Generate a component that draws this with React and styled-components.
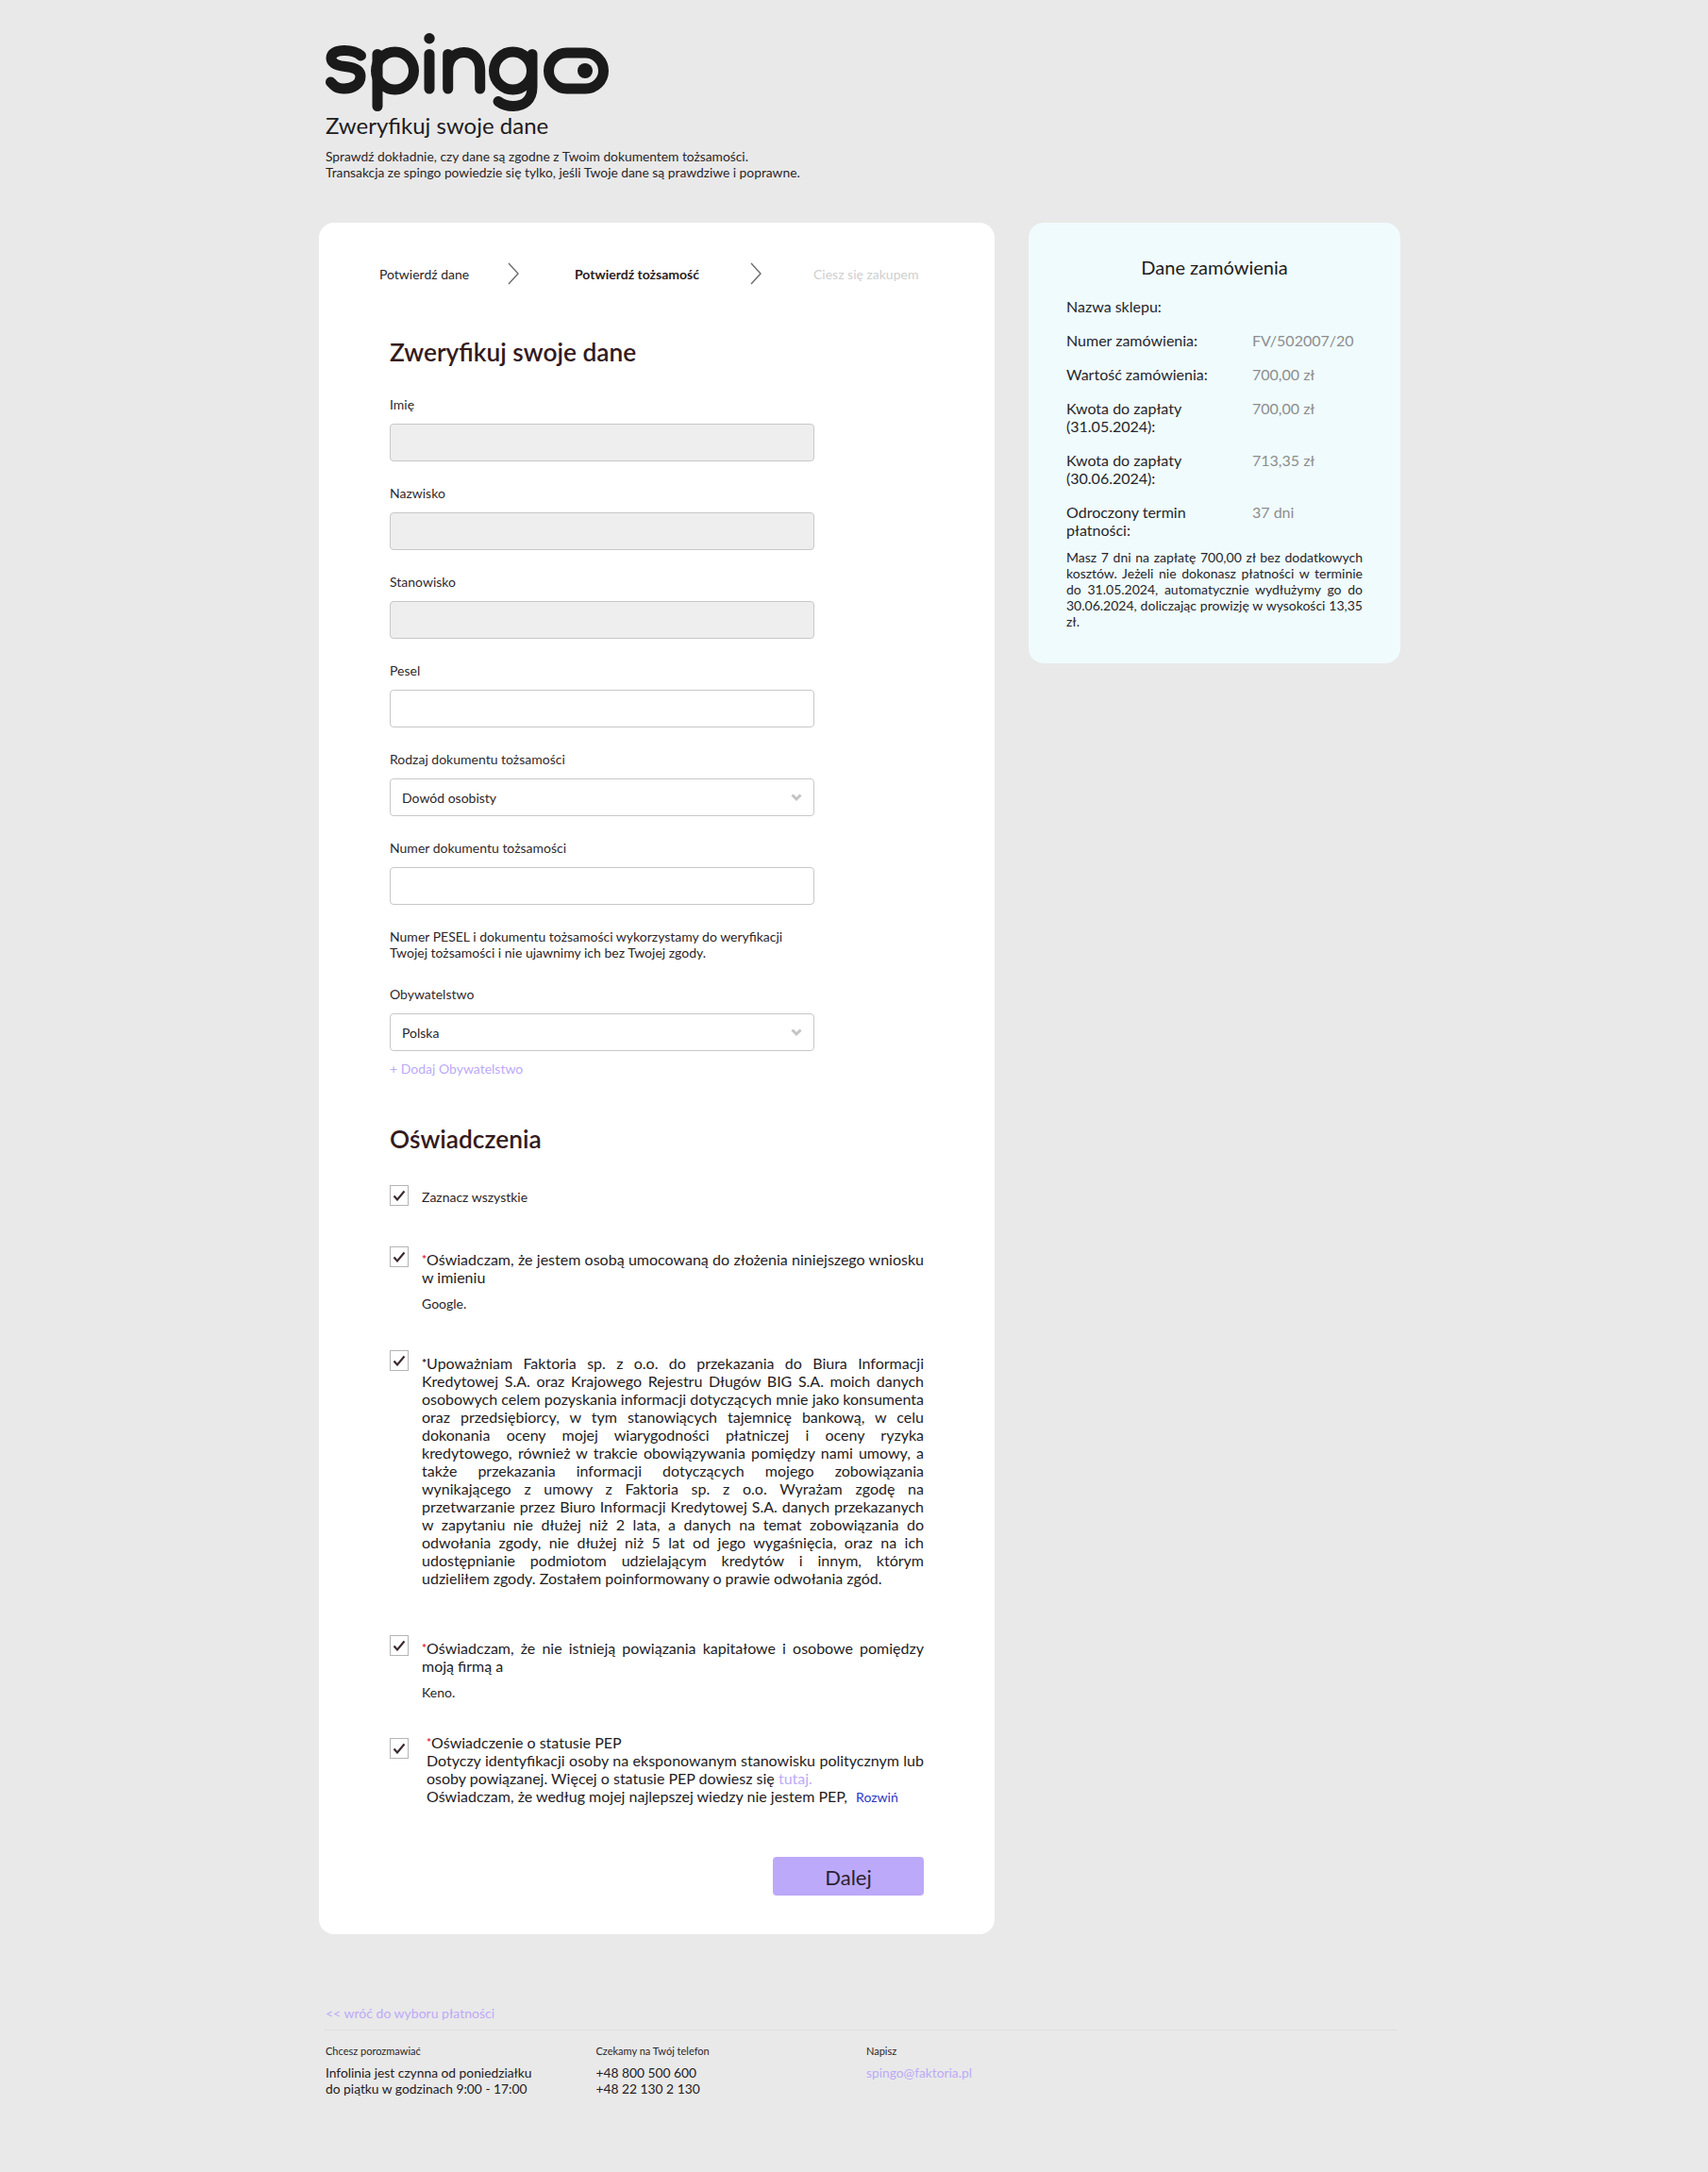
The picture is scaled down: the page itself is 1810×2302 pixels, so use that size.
import React from 'react';
import styled, { createGlobalStyle } from 'styled-components';

const Global = createGlobalStyle`
  html, body { margin: 0; padding: 0; background: #e9e9e9; }
  body { font-family: Lato, "Noto Sans", sans-serif; color: #1f1a1c; }
  * { box-sizing: border-box; }
`;

const Page = styled.div`
  width: 1810px;
  min-height: 2302px;
  background: #e9e9e9;
  padding: 30px 0 0 338px;
`;
const Header = styled.header`
  padding-left: 7px;
  width: 800px;
`;
const LogoBox = styled.div`
  height: 89px;
  margin-left: -5px;
`;
const PageTitle = styled.h1`
  margin: 0;
  font-size: 24px;
  line-height: 28px;
  font-weight: 400;
  color: #201c20;
`;
const Lead = styled.p`
  margin: 10px 0 0;
  font-size: 13.8px;
  line-height: 17px;
  color: #2b2628;
`;
const Columns = styled.div`
  display: flex;
  align-items: flex-start;
  gap: 36px;
  margin-top: 45px;
`;
const MainCard = styled.main`
  width: 716px;
  height: 1814px;
  background: #fff;
  border-radius: 16px;
  padding: 39px 75px 0 75px;
`;
const Steps = styled.nav`
  display: flex;
  align-items: center;
  margin-left: -11px;
  height: 30px;
  font-size: 14px;
`;
const Step = styled.span`
  width: ${p => p.$w}px;
  flex: none;
  font-weight: ${p => (p.$active ? 700 : 400)};
  color: ${p => (p.$muted ? '#cfcfcf' : p.$active ? '#2b1d20' : '#2b2628')};
`;
const StepArrow = styled.svg`
  width: 14px;
  height: 26px;
  flex: none;
  margin-right: ${p => p.$mr}px;
  fill: none;
  stroke: #6f6a6b;
  stroke-width: 1.4;
`;
const SectionTitle = styled.h2`
  margin: ${p => p.$mt}px 0 0;
  font-size: 26.3px;
  line-height: 32px;
  font-weight: 600;
  color: #341a1c;
`;
const Field = styled.div`
  margin-top: ${p => p.$mt ?? 25}px;
  width: 450px;
`;
const Label = styled.label`
  display: block;
  font-size: 14px;
  line-height: 18px;
  color: #2f2a2c;
  margin-bottom: 11px;
`;
const InputBox = styled.div`
  height: 40px;
  border: 1px solid #c8c8c8;
  border-radius: 4px;
  background: ${p => (p.$disabled ? '#eeeeee' : '#fff')};
  display: flex;
  align-items: center;
  justify-content: space-between;
  padding: 1px 11px 0 12px;
  font-size: 14px;
  color: #2b2628;
`;
const Chevron = styled.svg`
  width: 14px;
  height: 10px;
  margin-top: -1px;
  fill: none;
  stroke: #c4c4c4;
  stroke-width: 3;
`;
const Hint = styled.p`
  margin: 25px 0 0;
  font-size: 14px;
  line-height: 17px;
  color: #2b2628;
  width: 450px;
`;
const AddLink = styled.a`
  display: block;
  margin-top: 10px;
  font-size: 14px;
  line-height: 18px;
  color: #bcaaf8;
`;
const Consents = styled.div`
  margin-top: 33px;
  width: 566px;
`;
const Consent = styled.div`
  display: flex;
  align-items: flex-start;
  gap: ${p => (p.$wide ? 19 : 14)}px;
  margin-top: ${p => p.$mt}px;
`;
const Box = styled.span`
  flex: none;
  width: 20px;
  height: 22px;
  border: 1px solid #b5b5b5;
  background: #fff;
  display: flex;
  align-items: center;
  justify-content: center;
  margin-top: ${p => p.$mt ?? 0}px;
`;
const Check = styled.svg`
  width: 14px;
  height: 12px;
  fill: none;
  stroke: #3a2a2c;
  stroke-width: 2.1;
`;
const ConsentBody = styled.div`
  flex: 1;
  min-width: 0;
  padding-top: ${p => p.$pt ?? 0}px;
`;
const ConsentText = styled.p`
  margin: 0;
  font-size: 16px;
  line-height: 19px;
  color: #241c1e;
  text-align: justify;
`;
const SmallText = styled.p`
  margin: ${p => p.$mt ?? 0}px 0 0;
  font-size: 14px;
  line-height: 18px;
  color: #2b2628;
`;
const Req = styled.span`
  color: ${p => (p.$dark ? '#241c1e' : '#e8233f')};
  font-size: 12px;
  font-weight: 700;
  vertical-align: 2px;
  line-height: 0;
`;
const SoftLink = styled.a`
  color: #bcaaf8;
`;
const Expand = styled.a`
  color: #2a35c8;
  font-size: 14px;
  margin-left: 5px;
`;
const ActionRow = styled.div`
  display: flex;
  justify-content: flex-end;
  margin-top: 54px;
  width: 566px;
`;
const NextButton = styled.button`
  width: 160px;
  height: 41px;
  border: 0;
  border-radius: 4px;
  background: #bca9f9;
  font-family: inherit;
  font-size: 22px;
  padding: 2px 0 0;
  color: #2a2230;
`;
const Side = styled.aside`
  width: 394px;
  height: 467px;
  background: #f0fbfd;
  border-radius: 16px;
  padding: 35px 40px 0;
`;
const SideTitle = styled.h3`
  margin: 0 0 20px;
  text-align: center;
  font-size: 20px;
  line-height: 24px;
  font-weight: 400;
  color: #1f1c20;
`;
const Row = styled.div`
  display: grid;
  grid-template-columns: 197px 1fr;
  font-size: 16px;
  line-height: 19px;
  margin-bottom: 17px;
  color: #26262a;
`;
const RowLabel = styled.span`
  max-width: 160px;
  white-space: ${p => (p.$nowrap ? 'nowrap' : 'normal')};
`;
const RowValue = styled.span`
  color: #8d8d8f;
`;
const SideNote = styled.p`
  margin: -6px 0 0;
  font-size: 14px;
  line-height: 17px;
  text-align: justify;
  color: #26262a;
`;
const Footer = styled.footer`
  margin: 75px 0 0 6px;
  width: 1136px;
`;
const Back = styled.a`
  display: block;
  font-size: 14px;
  line-height: 18px;
  color: #bcaaf8;
  padding: 0 0 8px 1px;
  border-bottom: 1px solid #dedede;
`;
const FootGrid = styled.div`
  display: grid;
  grid-template-columns: 286.5px 286.5px 1fr;
  padding: 15px 0 0 1px;
`;
const FootLabel = styled.div`
  font-size: 11px;
  line-height: 14px;
  color: #2b2628;
  margin-bottom: 7px;
`;
const FootText = styled.div`
  font-size: 13.8px;
  line-height: 17px;
  color: ${p => (p.$soft ? '#bcaaf8' : '#242022')};
`;

const Logo = () => (
  <svg width="310" height="89" viewBox="0 0 310 89" fill="none" stroke="#1a1a1a" strokeWidth="11" strokeLinecap="round" strokeLinejoin="round">
    <path d="M42.500 29c-4-3.500-10-5.500-17.500-5.500-8.500 0-14 3-14 8 0 6 6 8 15 9 10 1 16 4 16 10.500 0 8-8 13-17.500 13-8 0-10.500-3-14-7" />
    <path d="M60 27.500v55" />
    <circle cx="78.500" cy="45" r="20" />
    <path d="M115 27.500v36.500" />
    <circle cx="115" cy="10.700" r="5.700" fill="#1a1a1a" stroke="none" />
    <path d="M134.700 64V27.500M134.700 44c0-11 7-18.500 17-18.500s17 7.500 17 18.500v20" />
    <circle cx="203.500" cy="45" r="20" />
    <path d="M224 27.500V62c0 14-9 20.500-20 20.500-7 0-12-2-16-5" />
    <rect x="241.500" y="26" width="58" height="38" rx="19" />
    <circle cx="280" cy="45" r="8" fill="#1a1a1a" stroke="none" />
  </svg>
);

const Arrow = ({ mr }) => (
  <StepArrow $mr={mr} viewBox="0 0 14 26"><path d="M2 2l10 11L2 24" /></StepArrow>
);
const Drop = () => (
  <Chevron viewBox="0 0 14 10"><path d="M2.500 2.500l4.500 4.500 4.500-4.500" /></Chevron>
);
const Tick = ({ mt }) => (
  <Box $mt={mt}><Check viewBox="0 0 14 12"><path d="M1.500 6.500l3.500 4L12.500 1.500" /></Check></Box>
);

const order = [
  ['Nazwa sklepu:', '', true],
  ['Numer zamówienia:', 'FV/502007/20', true],
  ['Wartość zamówienia:', '700,00 zł', true],
  ['Kwota do zapłaty (31.05.2024):', '700,00 zł'],
  ['Kwota do zapłaty (30.06.2024):', '713,35 zł'],
  ['Odroczony termin płatności:', '37 dni'],
];

export default function App() {
  return (
    <Page>
      <Global />
      <Header>
        <LogoBox><Logo /></LogoBox>
        <PageTitle>Zweryfikuj swoje dane</PageTitle>
        <Lead>
          Sprawdź dokładnie, czy dane są zgodne z Twoim dokumentem tożsamości.<br />
          Transakcja ze spingo powiedzie się tylko, jeśli Twoje dane są prawdziwe i poprawne.
        </Lead>
      </Header>
      <Columns>
        <MainCard>
          <Steps>
            <Step $w={135}>Potwierdź dane</Step>
            <Arrow mr={58} />
            <Step $w={185} $active>Potwierdź tożsamość</Step>
            <Arrow mr={54} />
            <Step $w={120} $muted>Ciesz się zakupem</Step>
          </Steps>
          <SectionTitle $mt={52}>Zweryfikuj swoje dane</SectionTitle>
          <Field $mt={31}><Label>Imię</Label><InputBox $disabled /></Field>
          <Field><Label>Nazwisko</Label><InputBox $disabled /></Field>
          <Field><Label>Stanowisko</Label><InputBox $disabled /></Field>
          <Field><Label>Pesel</Label><InputBox /></Field>
          <Field><Label>Rodzaj dokumentu tożsamości</Label><InputBox>Dowód osobisty<Drop /></InputBox></Field>
          <Field><Label>Numer dokumentu tożsamości</Label><InputBox /></Field>
          <Hint>
            Numer PESEL i dokumentu tożsamości wykorzystamy do weryfikacji<br />
            Twojej tożsamości i nie ujawnimy ich bez Twojej zgody.
          </Hint>
          <Field $mt={27}><Label>Obywatelstwo</Label><InputBox>Polska<Drop /></InputBox></Field>
          <AddLink>+ Dodaj Obywatelstwo</AddLink>
          <SectionTitle $mt={49}>Oświadczenia</SectionTitle>
          <Consents>
            <Consent $mt={0}>
              <Tick />
              <ConsentBody $pt={4}><SmallText>Zaznacz wszystkie</SmallText></ConsentBody>
            </Consent>
            <Consent $mt={43}>
              <Tick />
              <ConsentBody $pt={4}>
                <ConsentText><Req>*</Req>Oświadczam, że jestem osobą umocowaną do złożenia niniejszego wniosku w imieniu</ConsentText>
                <SmallText $mt={10}>Google.</SmallText>
              </ConsentBody>
            </Consent>
            <Consent $mt={40}>
              <Tick />
              <ConsentBody $pt={4}>
                <ConsentText><Req $dark>*</Req>Upoważniam Faktoria sp. z o.o. do przekazania do Biura Informacji Kredytowej S.A. oraz Krajowego Rejestru Długów BIG S.A. moich danych osobowych celem pozyskania informacji dotyczących mnie jako konsumenta oraz przedsiębiorcy, w tym stanowiących tajemnicę bankową, w celu dokonania oceny mojej wiarygodności płatniczej i oceny ryzyka kredytowego, również w trakcie obowiązywania pomiędzy nami umowy, a także przekazania informacji dotyczących mojego zobowiązania wynikającego z umowy z Faktoria sp. z o.o. Wyrażam zgodę na przetwarzanie przez Biuro Informacji Kredytowej S.A. danych przekazanych w zapytaniu nie dłużej niż 2 lata, a danych na temat zobowiązania do odwołania zgody, nie dłużej niż 5 lat od jego wygaśnięcia, oraz na ich udostępnianie podmiotom udzielającym kredytów i innym, którym udzieliłem zgody. Zostałem poinformowany o prawie odwołania zgód.</ConsentText>
              </ConsentBody>
            </Consent>
            <Consent $mt={51}>
              <Tick />
              <ConsentBody $pt={4}>
                <ConsentText><Req>*</Req>Oświadczam, że nie istnieją powiązania kapitałowe i osobowe pomiędzy moją firmą a</ConsentText>
                <SmallText $mt={10}>Keno.</SmallText>
              </ConsentBody>
            </Consent>
            <Consent $mt={34} $wide>
              <Tick mt={5} />
              <ConsentBody>
                <ConsentText><Req>*</Req>Oświadczenie o statusie PEP<br />
                  Dotyczy identyfikacji osoby na eksponowanym stanowisku politycznym lub osoby powiązanej. Więcej o statusie PEP dowiesz się <SoftLink>tutaj.</SoftLink><br />
                  Oświadczam, że według mojej najlepszej wiedzy nie jestem PEP, <Expand>Rozwiń</Expand>
                </ConsentText>
              </ConsentBody>
            </Consent>
          </Consents>
          <ActionRow><NextButton>Dalej</NextButton></ActionRow>
        </MainCard>
        <Side>
          <SideTitle>Dane zamówienia</SideTitle>
          {order.map(([k, v, nowrap]) => (
            <Row key={k}><RowLabel $nowrap={nowrap}>{k}</RowLabel><RowValue>{v}</RowValue></Row>
          ))}
          <SideNote>Masz 7 dni na zapłatę 700,00 zł bez dodatkowych kosztów. Jeżeli nie dokonasz płatności w terminie do 31.05.2024, automatycznie wydłużymy go do 30.06.2024, doliczając prowizję w wysokości 13,35 zł.</SideNote>
        </Side>
      </Columns>
      <Footer>
        <Back>&lt;&lt; wróć do wyboru płatności</Back>
        <FootGrid>
          <div>
            <FootLabel>Chcesz porozmawiać</FootLabel>
            <FootText>Infolinia jest czynna od poniedziałku<br />do piątku w godzinach 9:00 - 17:00</FootText>
          </div>
          <div>
            <FootLabel>Czekamy na Twój telefon</FootLabel>
            <FootText>+48 800 500 600<br />+48 22 130 2 130</FootText>
          </div>
          <div>
            <FootLabel>Napisz</FootLabel>
            <FootText $soft>spingo@faktoria.pl</FootText>
          </div>
        </FootGrid>
      </Footer>
    </Page>
  );
}
